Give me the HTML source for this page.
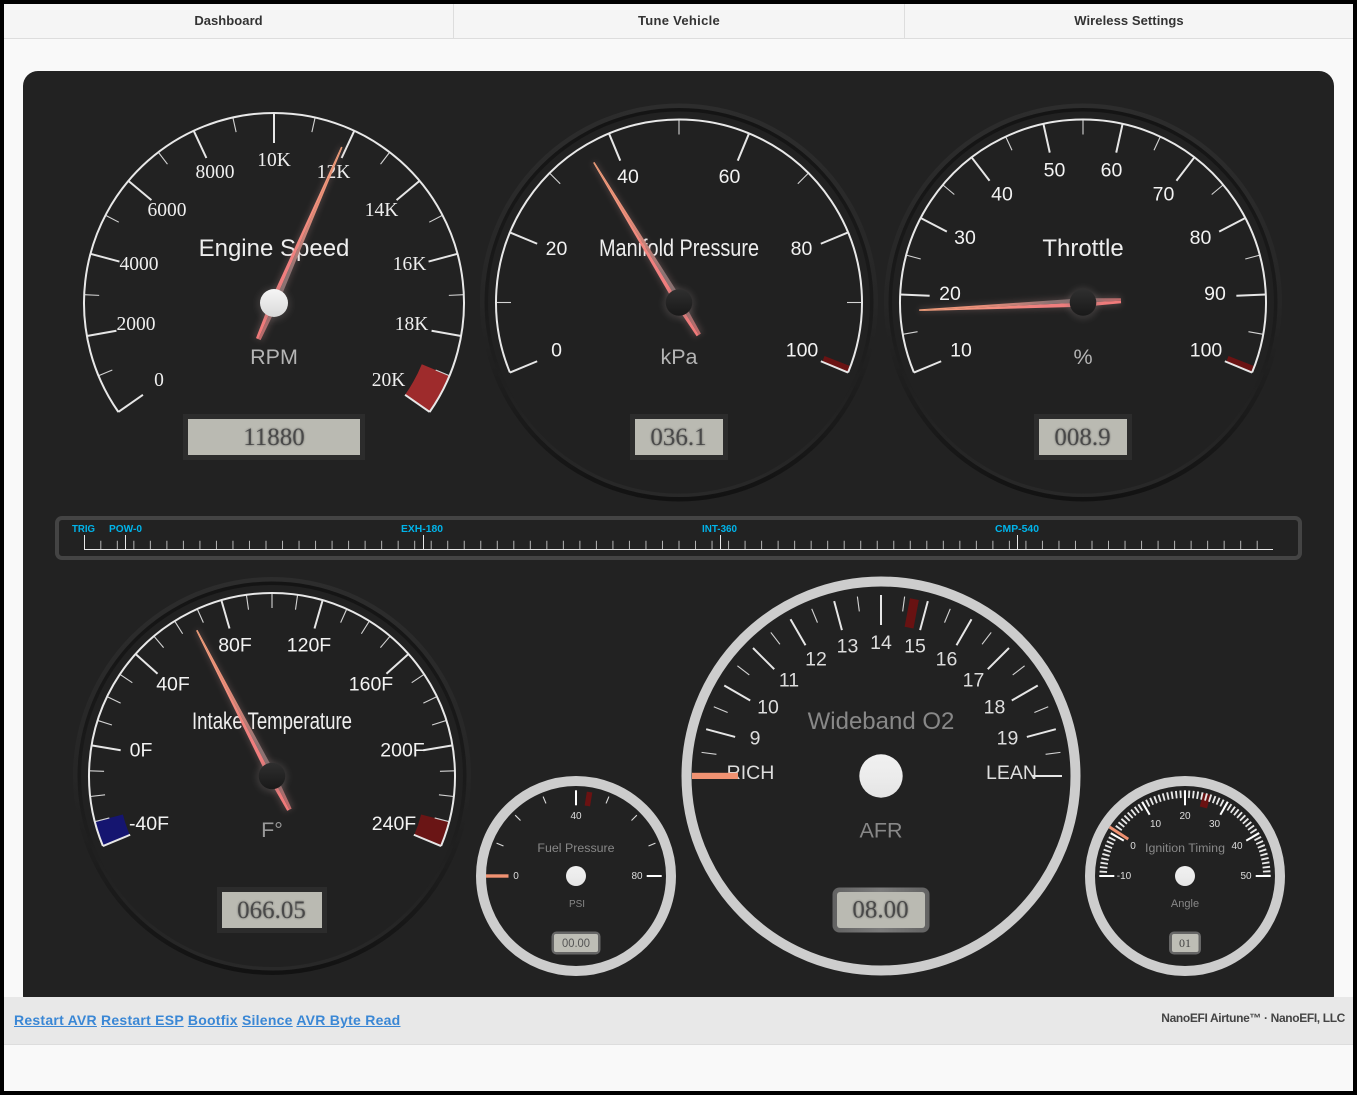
<!DOCTYPE html>
<html lang="en">
<head>
<meta charset="utf-8">
<title>NanoEFI Airtune Dashboard</title>
<style>
html,body{margin:0;padding:0;background:#000}
body{position:relative;width:1357px;height:1095px;overflow:hidden;font-family:"Liberation Sans",Arial,sans-serif}
#page{position:absolute;left:4px;top:4px;width:1349px;height:1087px;background:#f9f9f9}
#nav{position:absolute;left:4px;top:4px;width:1349px;height:34px;background:#f5f5f5;border-bottom:1px solid #ddd;display:flex}
#nav a{display:block;text-align:center;line-height:33px;font-size:13px;font-weight:bold;color:#333;text-decoration:none;box-sizing:border-box}
#nav a:nth-child(1){width:450px;border-right:1px solid #ddd;letter-spacing:.05px}
#nav a:nth-child(2){width:451px;border-right:1px solid #ddd;letter-spacing:.3px}
#nav a:nth-child(3){width:448px;letter-spacing:.07px}
#panel{position:absolute;left:23px;top:71px;width:1311px;height:940px;background:#222;border-radius:15px}
svg{position:absolute;left:0;top:0}
#foot{position:absolute;left:4px;top:997px;width:1349px;height:47px;background:#e8e8e8;border-bottom:1px solid #ddd}
#links{position:absolute;left:14px;top:1012px;line-height:16px;font-size:14px;font-weight:bold;white-space:nowrap;letter-spacing:.25px}
#links a{color:#3a87d5;text-decoration:underline}
#copy{position:absolute;right:12px;top:1011px;line-height:14px;font-size:12px;font-weight:bold;color:#444;letter-spacing:-.36px;white-space:nowrap}
text{font-family:"Liberation Sans",Arial,sans-serif;text-anchor:middle}
.n{font-size:19.5px;fill:#f2f2f2}
.sn{font-family:"Liberation Serif","Times New Roman",serif;font-size:19.5px;fill:#eee}
.t{font-size:24px;fill:#eee}
.tg{font-size:24px;fill:#888}
.u{font-size:21.5px;fill:#b4b4b4}
.ug{font-size:21.5px;fill:#888}
.v{font-family:"Liberation Serif","Times New Roman",serif;font-size:25px;fill:#4a4a4a;filter:url(#s)}
.sm{font-size:10px;fill:#ddd}
.st{font-size:12.4px;fill:#888}
.su{font-size:10.5px;fill:#888}
.tm{font-size:10px;font-weight:bold;fill:#00b4ea;text-anchor:start}
.M{stroke:#e6e6e6;stroke-width:2}
.m{stroke:#d4d4d4;stroke-width:1.1}
.arc{fill:none;stroke:#e8e8e8;stroke-width:2}
</style>
</head>
<body>
<div id="page"></div>
<div id="nav"><a href="#">Dashboard</a><a href="#">Tune Vehicle</a><a href="#">Wireless Settings</a></div>
<div id="panel"></div>

<svg width="1357" height="1095" viewBox="0 0 1357 1095" xmlns="http://www.w3.org/2000/svg">
<defs>
  <filter id="b" x="-200%" y="-20%" width="500%" height="140%"><feGaussianBlur stdDeviation="3"/></filter>
  <filter id="hb" x="-50%" y="-50%" width="200%" height="200%"><feGaussianBlur stdDeviation="3"/></filter>
  <filter id="s" x="-20%" y="-20%" width="140%" height="140%"><feDropShadow dx="0" dy="0" stdDeviation="1" flood-color="#000" flood-opacity=".45"/></filter>
  <linearGradient id="nl" gradientUnits="userSpaceOnUse" x1="0" y1="38" x2="0" y2="-164">
    <stop offset="0" stop-color="#f07a7a"/><stop offset=".4" stop-color="#f07f7f"/><stop offset="1" stop-color="#f6a27c"/>
  </linearGradient>
  <linearGradient id="nr" gradientUnits="userSpaceOnUse" x1="0" y1="38" x2="0" y2="-164">
    <stop offset="0" stop-color="#c06a6a"/><stop offset=".2" stop-color="#8b7070"/><stop offset=".35" stop-color="#8c7272"/><stop offset=".5" stop-color="#c08078"/><stop offset=".7" stop-color="#e88e78"/><stop offset="1" stop-color="#f6a27c"/>
  </linearGradient>
  <linearGradient id="pl1" x1="0" y1="0" x2="0" y2="1"><stop offset="0" stop-color="#2d2d2d"/><stop offset=".5" stop-color="#262626"/><stop offset="1" stop-color="#121212"/></linearGradient>
  <linearGradient id="pl2" x1="0" y1="0" x2="0" y2="1"><stop offset="0" stop-color="#141414"/><stop offset=".5" stop-color="#1a1a1a"/><stop offset="1" stop-color="#292929"/></linearGradient>
  <linearGradient id="hd" x1="0" y1="0" x2="0" y2="1"><stop offset="0" stop-color="#2f2f2f"/><stop offset="1" stop-color="#191919"/></linearGradient>
  <linearGradient id="hw" x1="0" y1="0" x2="0" y2="1"><stop offset="0" stop-color="#f6f6f6"/><stop offset=".7" stop-color="#e2e2e2"/><stop offset="1" stop-color="#d8d8d8"/></linearGradient>
  <linearGradient id="hl" x1="0" y1="0" x2="0" y2="1"><stop offset="0" stop-color="#f0f0f0"/><stop offset=".5" stop-color="#ececec"/><stop offset="1" stop-color="#e4e4e4"/></linearGradient>
  <linearGradient id="bz" x1="0" y1="0" x2="1" y2="0"><stop offset="0" stop-color="#626262"/><stop offset=".5" stop-color="#7b7b7b"/><stop offset="1" stop-color="#626262"/></linearGradient>

  <g id="plate"><circle r="199" fill="url(#pl1)"/><circle r="194.5" fill="url(#pl2)"/><circle r="191" fill="#212121"/></g>
  <g id="needle">
    <polygon points="-5,38 -6,0 -2,-164 2,-164 6,0 5,38" fill="rgba(188,143,143,.24)" filter="url(#b)"/>
    <polygon points="0,38 -2.5,38 -4.200,0 -.8,-164 0,-164" fill="url(#nl)"/>
    <polygon points="0,38 2.500,38 4.200,0 .8,-164 0,-164" fill="url(#nr)"/>
  </g>
  <g id="hub"><circle r="16" cy="1" fill="rgba(120,110,110,.28)" filter="url(#hb)"/><circle r="13.3" fill="url(#hd)"/></g>

  <line id="a1" y1="-190" y2="-160" class="M"/><line id="a1m" y1="-190" y2="-175" class="m"/>
  <line id="a2" y1="-183" y2="-153.500" class="M"/><line id="a2m" y1="-183" y2="-168" class="m"/>
  <line id="a5" y1="-181" y2="-151" class="M"/><line id="a5m" y1="-181" y2="-166" class="m"/>
  <line id="a6" y1="-85.700" y2="-70.700" stroke="#fff" stroke-width="2"/><line id="a6m" y1="-86" y2="-78.500" stroke="#ddd" stroke-width="1.100"/>
</defs>

<!-- ENGINE SPEED -->
<g transform="translate(274,303)">
  <path d="M155.6,109 A190,190 0 0 0 175.5,72.7 L147.8,61.2 A160,160 0 0 1 131.1,91.8 Z" fill="#9e2b2c"/>
  <use href="#a1" transform="rotate(-125)"/><use href="#a1" transform="rotate(-100)"/><use href="#a1" transform="rotate(-75)"/><use href="#a1" transform="rotate(-50)"/><use href="#a1" transform="rotate(-25)"/><use href="#a1"/><use href="#a1" transform="rotate(25)"/><use href="#a1" transform="rotate(50)"/><use href="#a1" transform="rotate(75)"/><use href="#a1" transform="rotate(100)"/><use href="#a1" transform="rotate(125)"/>
  <use href="#a1m" transform="rotate(-112.5)"/><use href="#a1m" transform="rotate(-87.5)"/><use href="#a1m" transform="rotate(-62.5)"/><use href="#a1m" transform="rotate(-37.5)"/><use href="#a1m" transform="rotate(-12.5)"/><use href="#a1m" transform="rotate(12.5)"/><use href="#a1m" transform="rotate(37.5)"/><use href="#a1m" transform="rotate(62.5)"/><use href="#a1m" transform="rotate(87.5)"/><use href="#a1m" transform="rotate(112.5)"/>
  <path class="arc" d="M-155.6,109 A190,190 0 1 1 155.6,109"/>
</g>
<text class="sn" x="159" y="386">0</text>
<text class="sn" x="136" y="330">2000</text>
<text class="sn" x="139" y="270">4000</text>
<text class="sn" x="167" y="216">6000</text>
<text class="sn" x="215" y="178">8000</text>
<text class="sn" x="274" y="166">10K</text>
<text class="sn" x="333.500" y="178">12K</text>
<text class="sn" x="381.500" y="216">14K</text>
<text class="sn" x="409.500" y="270">16K</text>
<text class="sn" x="411.500" y="330">18K</text>
<text class="sn" x="388.500" y="386">20K</text>
<text class="t" x="274" y="256">Engine Speed</text>
<text class="u" x="274" y="364">RPM</text>
<rect x="183" y="414" width="182" height="46" fill="#2c2c2c"/>
<rect x="188" y="419" width="172" height="36" fill="#babab2"/>
<text class="v" x="274" y="445">11880</text>
<use href="#needle" transform="translate(274,303) rotate(23.5) scale(1,1.037)"/>
<circle cx="274" cy="304" r="17" fill="rgba(120,110,110,.25)" filter="url(#hb)"/>
<circle cx="274" cy="303" r="14" fill="url(#hw)"/>

<!-- MANIFOLD PRESSURE -->
<g transform="translate(679,302.5)">
  <use href="#plate"/>
  <line y1="-183" y2="-155" transform="rotate(111.4)" stroke="#6a1313" stroke-width="6.500"/>
  <use href="#a2" transform="rotate(-112.5)"/><use href="#a2" transform="rotate(-67.5)"/><use href="#a2" transform="rotate(-22.5)"/><use href="#a2" transform="rotate(22.5)"/><use href="#a2" transform="rotate(67.5)"/><use href="#a2" transform="rotate(112.5)"/>
  <use href="#a2m" transform="rotate(-90)"/><use href="#a2m" transform="rotate(-45)"/><use href="#a2m"/><use href="#a2m" transform="rotate(45)"/><use href="#a2m" transform="rotate(90)"/>
  <path class="arc" d="M-169.07,70.03 A183,183 0 1 1 169.07,70.03"/>
</g>
<text class="n" x="556.500" y="356.500">0</text>
<text class="n" x="556.500" y="255">20</text>
<text class="n" x="628" y="183">40</text>
<text class="n" x="729.500" y="183">60</text>
<text class="n" x="801.500" y="255">80</text>
<text class="n" x="802" y="356.500">100</text>
<text class="t" x="679" y="256" textLength="160" lengthAdjust="spacingAndGlyphs">Manifold Pressure</text>
<text class="u" x="679" y="364">kPa</text>
<rect x="630" y="414" width="98" height="46" fill="#2c2c2c"/>
<rect x="635" y="419" width="88" height="36" fill="#babab2"/>
<text class="v" x="678.500" y="445">036.1</text>
<use href="#needle" transform="translate(679,302.500) rotate(-31.3)"/>
<use href="#hub" transform="translate(679,302.500)"/>

<!-- THROTTLE -->
<g transform="translate(1083,302.5)">
  <use href="#plate"/>
  <line y1="-183" y2="-155" transform="rotate(111.4)" stroke="#6a1313" stroke-width="6.500"/>
  <use href="#a2" transform="rotate(-112.5)"/><use href="#a2" transform="rotate(-87.5)"/><use href="#a2" transform="rotate(-62.5)"/><use href="#a2" transform="rotate(-37.5)"/><use href="#a2" transform="rotate(-12.5)"/><use href="#a2" transform="rotate(12.5)"/><use href="#a2" transform="rotate(37.5)"/><use href="#a2" transform="rotate(62.5)"/><use href="#a2" transform="rotate(87.5)"/><use href="#a2" transform="rotate(112.5)"/>
  <use href="#a2m" transform="rotate(-100)"/><use href="#a2m" transform="rotate(-75)"/><use href="#a2m" transform="rotate(-50)"/><use href="#a2m" transform="rotate(-25)"/><use href="#a2m"/><use href="#a2m" transform="rotate(25)"/><use href="#a2m" transform="rotate(50)"/><use href="#a2m" transform="rotate(75)"/><use href="#a2m" transform="rotate(100)"/>
  <path class="arc" d="M-169.07,70.03 A183,183 0 1 1 169.07,70.03"/>
</g>
<text class="n" x="961" y="356.500">10</text>
<text class="n" x="950" y="300">20</text>
<text class="n" x="965" y="244">30</text>
<text class="n" x="1002" y="200.500">40</text>
<text class="n" x="1054.500" y="176.500">50</text>
<text class="n" x="1111.500" y="176.500">60</text>
<text class="n" x="1163.500" y="200.500">70</text>
<text class="n" x="1200.500" y="244">80</text>
<text class="n" x="1215" y="300">90</text>
<text class="n" x="1206" y="356.500">100</text>
<text class="t" x="1083" y="256">Throttle</text>
<text class="u" x="1083" y="364">%</text>
<rect x="1034" y="414" width="98" height="46" fill="#2c2c2c"/>
<rect x="1039" y="419" width="88" height="36" fill="#babab2"/>
<text class="v" x="1082.500" y="445">008.9</text>
<use href="#needle" transform="translate(1083,302.500) rotate(-92.7)"/>
<use href="#hub" transform="translate(1083,302.500)"/>

<!-- ENGINE TIMELINE -->
<rect x="57" y="518" width="1243" height="40" rx="5" ry="5" fill="#222" stroke="#444" stroke-width="4"/>
<text class="tm" x="72" y="532" textLength="23" lengthAdjust="spacingAndGlyphs">TRIG</text>
<text class="tm" x="109" y="532" textLength="33" lengthAdjust="spacingAndGlyphs">POW-0</text>
<text class="tm" x="401" y="532" textLength="42" lengthAdjust="spacingAndGlyphs">EXH-180</text>
<text class="tm" x="702" y="532" textLength="35" lengthAdjust="spacingAndGlyphs">INT-360</text>
<text class="tm" x="995" y="532" textLength="44" lengthAdjust="spacingAndGlyphs">CMP-540</text>
<line x1="100.300" y1="545" x2="1258.500" y2="545" stroke="#b5b5b5" stroke-width="8.500" stroke-dasharray="1 15.520"/>
<g stroke="#e8e8e8" stroke-width="1">
  <line x1="84.500" y1="535" x2="84.500" y2="550"/>
  <line x1="125.500" y1="535" x2="125.500" y2="550"/>
  <line x1="423.500" y1="535" x2="423.500" y2="550"/>
  <line x1="720.500" y1="535" x2="720.500" y2="550"/>
  <line x1="1017.500" y1="535" x2="1017.500" y2="550"/>
  <line x1="84" y1="549.500" x2="1273" y2="549.500"/>
</g>

<!-- INTAKE TEMPERATURE -->
<g transform="translate(272,776)">
  <use href="#plate"/>
  <path d="M169.1,70 A183,183 0 0 0 177.2,45.7 L149.1,38.5 A154,154 0 0 1 142.3,58.9 Z" fill="#6a1515"/>
  <path d="M-169.1,70 A183,183 0 0 1 -177.2,45.7 L-149.1,38.5 A154,154 0 0 0 -142.3,58.9 Z" fill="#151570"/>
  <use href="#a2" transform="rotate(-112.5)"/><use href="#a2" transform="rotate(-80.36)"/><use href="#a2" transform="rotate(-48.21)"/><use href="#a2" transform="rotate(-16.07)"/><use href="#a2" transform="rotate(16.07)"/><use href="#a2" transform="rotate(48.21)"/><use href="#a2" transform="rotate(80.36)"/><use href="#a2" transform="rotate(112.5)"/>
  <use href="#a2m" transform="rotate(-104.46)"/><use href="#a2m" transform="rotate(-96.43)"/><use href="#a2m" transform="rotate(-88.39)"/><use href="#a2m" transform="rotate(-72.32)"/><use href="#a2m" transform="rotate(-64.29)"/><use href="#a2m" transform="rotate(-56.25)"/><use href="#a2m" transform="rotate(-40.18)"/><use href="#a2m" transform="rotate(-32.14)"/><use href="#a2m" transform="rotate(-24.11)"/><use href="#a2m" transform="rotate(-8.04)"/><use href="#a2m"/><use href="#a2m" transform="rotate(8.04)"/><use href="#a2m" transform="rotate(24.11)"/><use href="#a2m" transform="rotate(32.14)"/><use href="#a2m" transform="rotate(40.18)"/><use href="#a2m" transform="rotate(56.25)"/><use href="#a2m" transform="rotate(64.29)"/><use href="#a2m" transform="rotate(72.32)"/><use href="#a2m" transform="rotate(88.39)"/><use href="#a2m" transform="rotate(96.43)"/><use href="#a2m" transform="rotate(104.46)"/>
  <path class="arc" d="M-169.07,70.03 A183,183 0 1 1 169.07,70.03"/>
</g>
<text class="n" x="149" y="830">-40F</text>
<text class="n" x="141" y="756.500">0F</text>
<text class="n" x="173" y="690.500">40F</text>
<text class="n" x="235" y="651.500">80F</text>
<text class="n" x="309" y="651.500">120F</text>
<text class="n" x="371" y="690.500">160F</text>
<text class="n" x="402.500" y="756.500">200F</text>
<text class="n" x="394" y="830">240F</text>
<text class="t" x="272" y="729" textLength="160" lengthAdjust="spacingAndGlyphs">Intake Temperature</text>
<text class="ug" x="272" y="837" style="fill:#999">F°</text>
<rect x="217" y="887" width="110" height="46" fill="#2c2c2c"/>
<rect x="222" y="892" width="100" height="36" fill="#babab2"/>
<text class="v" x="271.500" y="918">066.05</text>
<use href="#needle" transform="translate(272,776) rotate(-27.3)"/>
<use href="#hub" transform="translate(272,776)"/>

<!-- FUEL PRESSURE -->
<g transform="translate(576,876)">
  <circle r="95" fill="#222" stroke="#cdcdcd" stroke-width="10"/>
  <line y1="-85" y2="-71" transform="rotate(9.2)" stroke="#6a1212" stroke-width="5.500"/>
  <use href="#a6" transform="rotate(-90)"/><use href="#a6"/><use href="#a6" transform="rotate(90)"/>
  <use href="#a6m" transform="rotate(-67.5)"/><use href="#a6m" transform="rotate(-45)"/><use href="#a6m" transform="rotate(-22.5)"/><use href="#a6m" transform="rotate(22.5)"/><use href="#a6m" transform="rotate(45)"/><use href="#a6m" transform="rotate(67.5)"/>
</g>
<text class="sm" x="576" y="819">40</text>
<text class="sm" x="516" y="879">0</text>
<text class="sm" x="637" y="879">80</text>
<text class="st" x="576" y="852">Fuel Pressure</text>
<text class="su" x="577" y="907" textLength="16" lengthAdjust="spacingAndGlyphs">PSI</text>
<rect x="486" y="874.300" width="22.500" height="3.400" fill="#f09272"/>
<circle cx="576" cy="876" r="10" fill="url(#hl)"/>
<rect x="551.500" y="931.500" width="49" height="23" rx="5" fill="#666"/>
<rect x="554" y="934" width="44" height="18" rx="2" fill="#bdbdb5"/>
<text x="576" y="946.800" font-size="12" fill="#555" textLength="28" lengthAdjust="spacingAndGlyphs">00.00</text>

<!-- WIDEBAND O2 -->
<g transform="translate(881,776)">
  <circle r="194.500" fill="#222" stroke="#cdcdcd" stroke-width="10"/>
  <line y1="-180" y2="-151" transform="rotate(10.7)" stroke="#681212" stroke-width="9"/>
  <use href="#a5" transform="rotate(-75)"/><use href="#a5" transform="rotate(-60)"/><use href="#a5" transform="rotate(-45)"/><use href="#a5" transform="rotate(-30)"/><use href="#a5" transform="rotate(-15)"/><use href="#a5"/><use href="#a5" transform="rotate(15)"/><use href="#a5" transform="rotate(30)"/><use href="#a5" transform="rotate(45)"/><use href="#a5" transform="rotate(60)"/><use href="#a5" transform="rotate(75)"/><use href="#a5" transform="rotate(90)"/>
  <use href="#a5m" transform="rotate(-82.5)"/><use href="#a5m" transform="rotate(-67.5)"/><use href="#a5m" transform="rotate(-52.5)"/><use href="#a5m" transform="rotate(-37.5)"/><use href="#a5m" transform="rotate(-22.5)"/><use href="#a5m" transform="rotate(-7.5)"/><use href="#a5m" transform="rotate(7.5)"/><use href="#a5m" transform="rotate(22.5)"/><use href="#a5m" transform="rotate(37.5)"/><use href="#a5m" transform="rotate(52.5)"/><use href="#a5m" transform="rotate(67.5)"/><use href="#a5m" transform="rotate(82.5)"/>
</g>
<text class="n" x="750.500" y="779" style="fill:#ddd">RICH</text>
<text class="n" x="755" y="744.500" style="fill:#ddd">9</text>
<text class="n" x="768" y="713.500" style="fill:#ddd">10</text>
<text class="n" x="789" y="686.500" style="fill:#ddd">11</text>
<text class="n" x="816" y="665.500" style="fill:#ddd">12</text>
<text class="n" x="847.500" y="652.500" style="fill:#ddd">13</text>
<text class="n" x="881" y="649" style="fill:#ddd">14</text>
<text class="n" x="915" y="652.500" style="fill:#ddd">15</text>
<text class="n" x="946.500" y="665.500" style="fill:#ddd">16</text>
<text class="n" x="973.500" y="686.500" style="fill:#ddd">17</text>
<text class="n" x="994.500" y="713.500" style="fill:#ddd">18</text>
<text class="n" x="1007.500" y="744.500" style="fill:#ddd">19</text>
<text class="n" x="1011.500" y="779" style="fill:#ddd">LEAN</text>
<text class="tg" x="881" y="729">Wideband O2</text>
<text class="ug" x="881" y="837.500">AFR</text>
<rect x="692" y="772.800" width="46" height="6.200" fill="#f09272"/>
<circle cx="881" cy="776" r="21.700" fill="url(#hl)"/>
<rect x="832.500" y="887.500" width="97" height="45" rx="7" fill="url(#bz)"/>
<rect x="837" y="892" width="88" height="36" rx="3" fill="#babab2"/>
<text class="v" x="880.500" y="917.500">08.00</text>

<!-- IGNITION TIMING -->
<g transform="translate(1185,876)">
  <circle r="95" fill="#222" stroke="#cdcdcd" stroke-width="10"/>
  <line y1="-85" y2="-71" transform="rotate(15)" stroke="#6a1212" stroke-width="7.500"/>
  <path d="M-81.800,0 A81.800,81.800 0 0 1 81.800,0" fill="none" stroke="#e8e8e8" stroke-width="7.500" pathLength="180" stroke-dasharray="1.300 1.700" stroke-dashoffset=".65"/>
  <use href="#a6" transform="rotate(-90)"/><use href="#a6" transform="rotate(-60)"/><use href="#a6" transform="rotate(-30)"/><use href="#a6"/><use href="#a6" transform="rotate(30)"/><use href="#a6" transform="rotate(60)"/><use href="#a6" transform="rotate(90)"/>
  <line y1="-90" y2="-67.700" transform="rotate(-57)" stroke="#f09272" stroke-width="3"/>
</g>
<text class="sm" x="1124" y="879">-10</text>
<text class="sm" x="1133" y="849">0</text>
<text class="sm" x="1155.500" y="827">10</text>
<text class="sm" x="1185" y="819">20</text>
<text class="sm" x="1214.500" y="827">30</text>
<text class="sm" x="1237" y="849">40</text>
<text class="sm" x="1246" y="879">50</text>
<text class="st" x="1185" y="852" textLength="80" lengthAdjust="spacingAndGlyphs">Ignition Timing</text>
<text class="su" x="1185" y="907" style="font-size:11px">Angle</text>
<circle cx="1185" cy="876" r="10" fill="url(#hl)"/>
<rect x="1169" y="931.500" width="32" height="23" rx="5" fill="#666"/>
<rect x="1172" y="934" width="26.500" height="18" rx="2" fill="#bdbdb5"/>
<text x="1185" y="947" font-size="12" fill="#444" style="font-family:'Liberation Serif',serif">01</text>
</svg>

<div id="foot"></div>
<div id="links"><a href="#">Restart AVR</a> <a href="#">Restart ESP</a> <a href="#">Bootfix</a> <a href="#">Silence</a> <a href="#">AVR Byte Read</a></div>
<div id="copy">NanoEFI Airtune™ · NanoEFI, LLC</div>
</body>
</html>
